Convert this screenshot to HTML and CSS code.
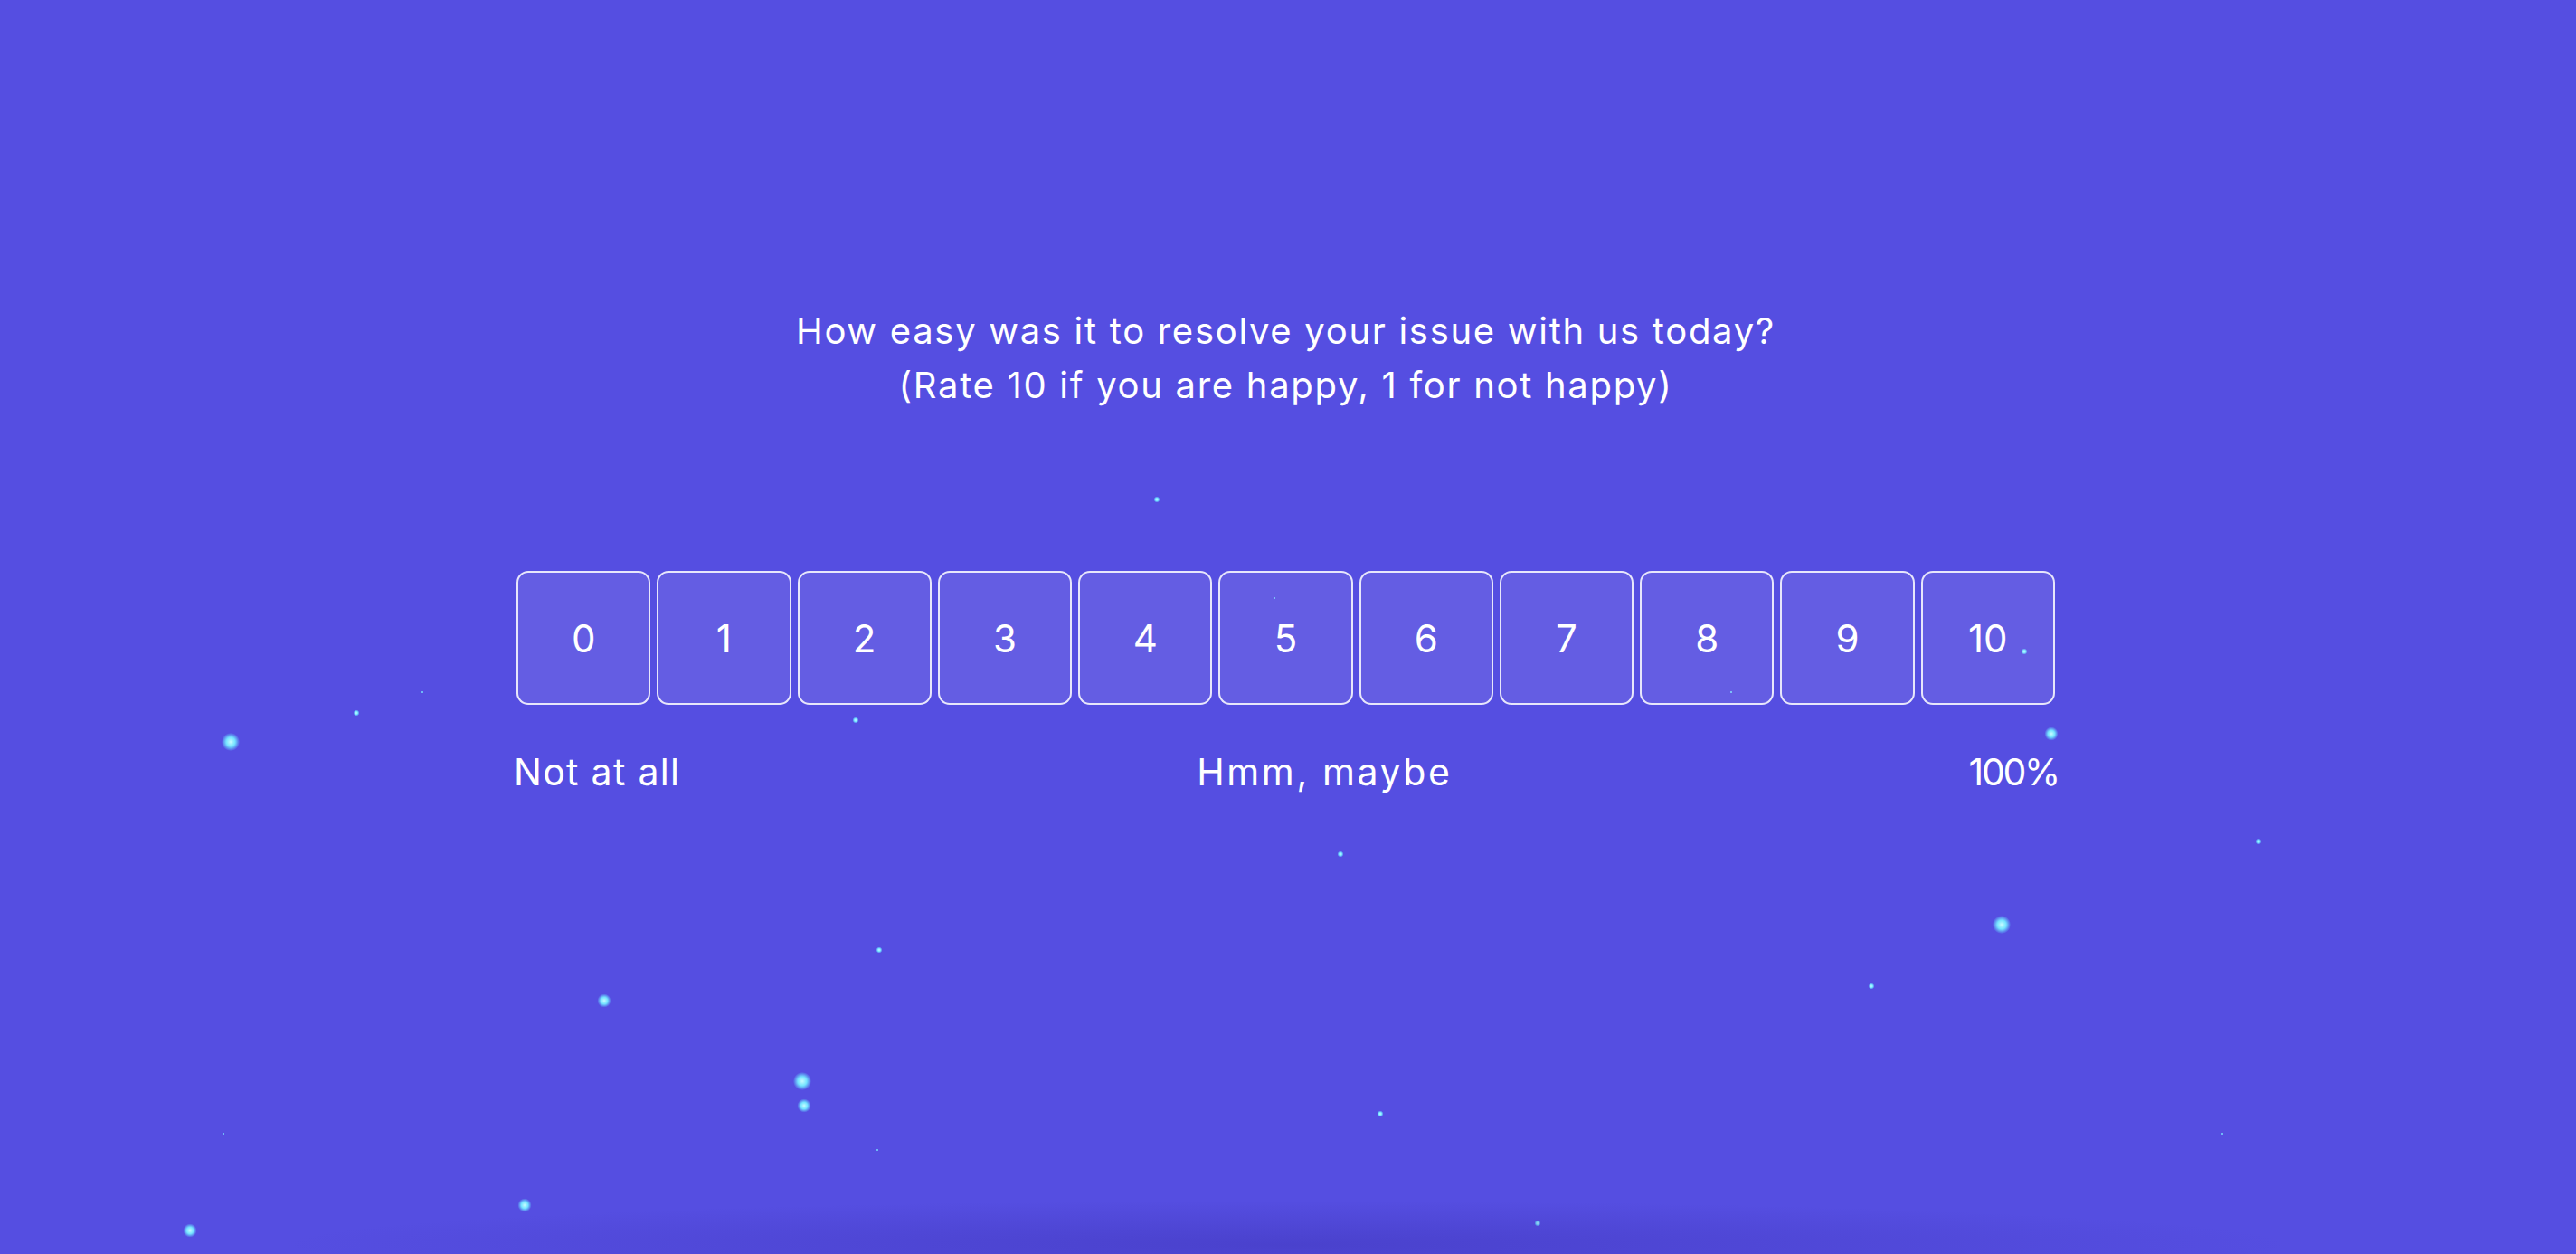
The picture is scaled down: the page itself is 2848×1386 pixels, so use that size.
FILE: index.html
```html
<!DOCTYPE html>
<html lang="en">
<head>
  <meta charset="UTF-8">
  <title>Feedback</title>
  <link rel="stylesheet" href="styles.css">
</head>
<body>

  <div class="sparks">
    <span class="spark lg" style="left:255px; top:820px"></span>
    <span class="spark lg" style="left:2213px; top:1022px"></span>
    <span class="spark lg" style="left:887px; top:1195px"></span>
    <span class="spark md" style="left:2268px; top:811px"></span>
    <span class="spark md" style="left:668px; top:1106px"></span>
    <span class="spark md" style="left:889px; top:1222px"></span>
    <span class="spark md" style="left:580px; top:1332px"></span>
    <span class="spark md" style="left:210px; top:1360px"></span>
    <span class="spark sm" style="left:1279px; top:552px"></span>
    <span class="spark sm" style="left:394px; top:788px"></span>
    <span class="spark sm" style="left:946px; top:796px"></span>
    <span class="spark sm" style="left:2238px; top:720px"></span>
    <span class="spark sm" style="left:1482px; top:944px"></span>
    <span class="spark sm" style="left:2497px; top:930px"></span>
    <span class="spark sm" style="left:972px; top:1050px"></span>
    <span class="spark sm" style="left:2069px; top:1090px"></span>
    <span class="spark sm" style="left:1526px; top:1231px"></span>
    <span class="spark sm" style="left:1700px; top:1352px"></span>
    <span class="spark xs" style="left:1409px; top:661px"></span>
    <span class="spark xs" style="left:467px; top:765px"></span>
    <span class="spark xs" style="left:1914px; top:765px"></span>
    <span class="spark xs" style="left:247px; top:1253px"></span>
    <span class="spark xs" style="left:970px; top:1271px"></span>
    <span class="spark xs" style="left:2457px; top:1253px"></span>
  </div>

  <div class="survey">
    <p class="question">How easy was it to resolve your issue with us today?<br>(Rate 10 if you are happy, 1 for not happy)</p>

    <div class="scale">
      <button class="score">0</button>
      <button class="score">1</button>
      <button class="score">2</button>
      <button class="score">3</button>
      <button class="score">4</button>
      <button class="score">5</button>
      <button class="score">6</button>
      <button class="score">7</button>
      <button class="score">8</button>
      <button class="score">9</button>
      <button class="score">10</button>
    </div>

    <div class="labels">
      <span>Not at all</span>
      <span class="mid">Hmm, maybe</span>
      <span class="end">100%</span>
    </div>
  </div>

  <div class="floor"></div>

</body>
</html>
```

FILE: styles.css
```css
body {
  margin: 0;
  height: 100vh;
  overflow: hidden;
  position: relative;
  background: #554ee1;
  color: #fff;
  font-family: Inter, "Noto Sans", sans-serif;
}
.survey {
  position: relative;
  z-index: 1;
  width: 1701px;
  margin-left: calc(50% - 853px);
  padding-top: 336px;
}
.question {
  margin: 0;
  font-size: 40px;
  line-height: 60px;
  font-weight: 400;
  letter-spacing: 1.7px;
  text-align: center;
}
.scale {
  display: flex;
  gap: 7px;
  margin-top: 175px;
}
.score {
  flex: 1;
  height: 148px;
  padding: 0;
  border: 2px solid rgba(255, 255, 255, 0.85);
  border-radius: 13px;
  background: rgba(255, 255, 255, 0.09);
  color: #fff;
  font-family: inherit;
  font-size: 42px;
  font-weight: 400;
  cursor: pointer;
}
.score:hover {
  background: rgba(255, 255, 255, 0.18);
}
.labels {
  display: flex;
  justify-content: space-between;
  margin: 50px -4px 0 -3px;
  font-size: 41px;
  line-height: 1.2;
  letter-spacing: 1.3px;
}
.labels .mid {
  letter-spacing: 2.6px;
}
.labels .end {
  letter-spacing: -2.3px;
}
.sparks {
  position: absolute;
  inset: 0;
  pointer-events: none;
}
.spark {
  position: absolute;
  border-radius: 50%;
  transform: translate(-50%, -50%);
  background: radial-gradient(circle, #c8fbff 0%, #74e4ff 35%, rgba(100, 210, 255, 0.35) 60%, rgba(100, 210, 255, 0) 72%);
}
.spark.lg { width: 20px; height: 20px; }
.spark.md { width: 15px; height: 15px; }
.spark.sm { width: 7px; height: 7px; }
.spark.xs { width: 3px; height: 3px; opacity: 0.7; }
/* soft dark haze along the bottom edge */
.floor {
  position: absolute;
  left: 300px;
  right: 300px;
  bottom: -40px;
  height: 100px;
  background: radial-gradient(ellipse at center, rgba(60, 50, 180, 0.45) 0%, rgba(60, 50, 180, 0) 70%);
  pointer-events: none;
}
```
